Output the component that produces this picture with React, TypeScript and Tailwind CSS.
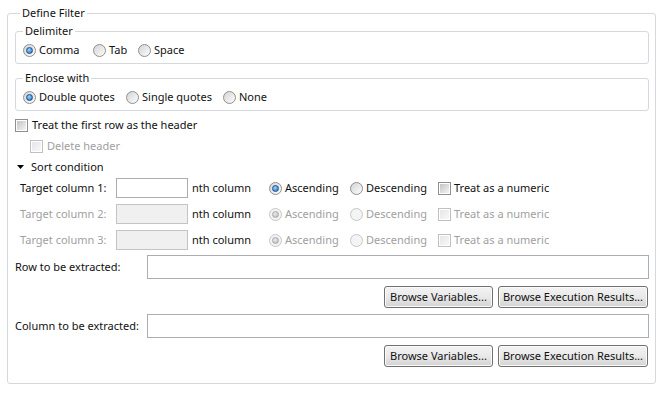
import clsx from 'clsx';

const dim = 'text-[#a0a0a0]';

function Radio({ checked, disabled }: { checked?: boolean; disabled?: boolean }) {
  return (
    <span
      className={clsx(
        'flex h-[13px] w-[13px] shrink-0 items-center justify-center rounded-full border',
        disabled
          ? 'border-[#c6c6c6] bg-[#f4f4f4]'
          : 'border-[#8e8f8f] bg-linear-to-br from-[#d4d4d4] to-[#fdfdfd]'
      )}
    >
      {checked && (
        <span
          className={clsx(
            'h-[7px] w-[7px] rounded-full border',
            disabled
              ? 'border-[#a8a8a8] bg-[radial-gradient(circle_at_40%_35%,#eeeeee,#b4b4b4)]'
              : 'border-[#1d4f8f] bg-[radial-gradient(circle_at_40%_35%,#9ad8ff,#1f66b3)]'
          )}
        />
      )}
    </span>
  );
}

function Check({ disabled }: { disabled?: boolean }) {
  return (
    <span
      className={clsx(
        'flex h-[13px] w-[13px] shrink-0 items-center justify-center border bg-white',
        disabled ? 'border-[#c0c0c0]' : 'border-[#8e8f8f]'
      )}
    >
      <span
        className={clsx(
          'h-[9px] w-[9px] bg-linear-to-br',
          disabled ? 'from-[#e6e6e6] to-[#f8f8f8]' : 'from-[#c4c4c4] to-[#f4f4f4]'
        )}
      />
    </span>
  );
}

function Option({ label, checked, disabled, w }: { label: string; checked?: boolean; disabled?: boolean; w: string }) {
  return (
    <div className={clsx('flex items-center gap-[3px]', w)}>
      <Radio checked={checked} disabled={disabled} />
      <span className={clsx('whitespace-nowrap', disabled && dim)}>{label}</span>
    </div>
  );
}

function Group({ title, children, className }: { title: string; children: React.ReactNode; className?: string }) {
  return (
    <fieldset className={clsx('rounded-[3px] border border-[#d5d9de]', className)}>
      <legend className="ml-[7px] px-[2px] leading-[16px]">{title}</legend>
      {children}
    </fieldset>
  );
}

function SortRow({ n, enabled }: { n: number; enabled?: boolean }) {
  return (
    <div className="flex h-[20px] items-center pl-[5px]">
      <span className={clsx('w-[96px] whitespace-nowrap', !enabled && dim)}>Target column {n}:</span>
      <div
        className={clsx(
          'h-[20px] w-[72px] border',
          enabled ? 'border-[#abadb3] bg-white' : 'border-[#c2c4c8] bg-[#f0f0f0]'
        )}
      />
      <span className="ml-[4px] w-[77px] whitespace-nowrap">nth column</span>
      <Option label="Ascending" checked disabled={!enabled} w="w-[81px]" />
      <Option label="Descending" disabled={!enabled} w="w-[88px]" />
      <div className="flex items-center gap-[3px]">
        <Check disabled={!enabled} />
        <span className={clsx('whitespace-nowrap', !enabled && dim)}>Treat as a numeric</span>
      </div>
    </div>
  );
}

function Button({ label, w }: { label: string; w: string }) {
  return (
    <div
      className={clsx(
        'flex h-[22px] items-center justify-center rounded-[3px] border border-[#707070] bg-linear-to-b from-[#f3f3f3] via-[#e9e9e9] to-[#d3d3d3] shadow-[inset_0_0_0_1px_#fbfbfb] whitespace-nowrap',
        w
      )}
    >
      {label}
    </div>
  );
}

function Extract({ label }: { label: string }) {
  return (
    <div className="flex flex-col">
      <div className="flex items-center">
        <span className="w-[132px] whitespace-nowrap">{label}</span>
        <div className="h-[24px] flex-1 border border-[#abadb3] bg-white" />
      </div>
      <div className="mt-[7px] flex justify-end gap-[5px] pr-[1px]">
        <Button label="Browse Variables..." w="w-[109px]" />
        <Button label="Browse Execution Results..." w="w-[150px]" />
      </div>
    </div>
  );
}

export default function App() {
  return (
    <div className="h-[393px] w-[663px] bg-white pt-[5px] font-['Noto_Sans',sans-serif] text-[11px] leading-[16px] text-[#111]">
      <fieldset className="mx-[7px] h-[379px] rounded-[3px] border border-[#d5d9de] pl-[7px] pr-[6px]">
        <legend className="ml-[5px] px-[2px] leading-[16px]">Define Filter</legend>

        <Group title="Delimiter" className="mt-[2px] pt-[3px] pb-[5px]">
          <div className="flex h-[16px] items-center pl-[7px]">
            <Option label="Comma" checked w="w-[70px]" />
            <Option label="Tab" w="w-[45px]" />
            <Option label="Space" w="w-auto" />
          </div>
        </Group>

        <Group title="Enclose with" className="mt-[6px] pt-[3px] pb-[5px]">
          <div className="flex h-[16px] items-center pl-[7px]">
            <Option label="Double quotes" checked w="w-[103px]" />
            <Option label="Single quotes" w="w-[97px]" />
            <Option label="None" w="w-auto" />
          </div>
        </Group>

        <div className="mt-[6px] flex h-[16px] items-center gap-[4px]">
          <Check />
          <span>Treat the first row as the header</span>
        </div>
        <div className="mt-[5px] flex h-[16px] items-center gap-[4px] pl-[15px]">
          <Check disabled />
          <span className={dim}>Delete header</span>
        </div>
        <div className="mt-[5px] flex h-[16px] items-center gap-[7px] pl-[2px]">
          <svg width="7" height="4" viewBox="0 0 7 4" className="shrink-0">
            <path d="M0 0H7L3.5 4Z" fill="#000" />
          </svg>
          <span>Sort condition</span>
        </div>

        <div className="mt-[3px] flex flex-col gap-[6px]">
          <SortRow n={1} enabled />
          <SortRow n={2} />
          <SortRow n={3} />
        </div>

        <div className="mt-[5px] flex flex-col gap-[6px]">
          <Extract label="Row to be extracted:" />
          <Extract label="Column to be extracted:" />
        </div>
      </fieldset>
    </div>
  );
}
